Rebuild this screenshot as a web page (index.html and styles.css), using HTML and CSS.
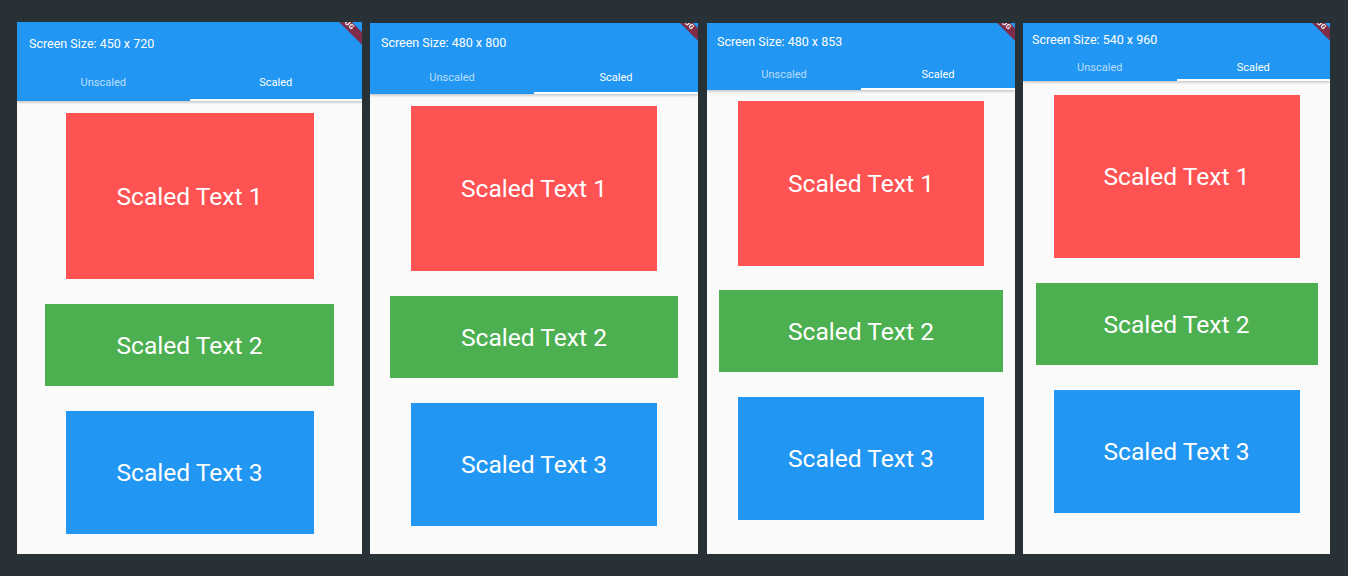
FILE: index.html
```html
<!DOCTYPE html>
<html>
<head>
<meta charset="utf-8">
<link rel="stylesheet" href="styles.css">
</head>
<body>
<div class="stage">
  <div class="phone p1">
    <div class="appbar">
      <div class="toolbar"><span class="title">Screen Size: 450 x 720</span></div>
      <div class="tabs">
        <div class="tab">Unscaled</div>
        <div class="tab active">Scaled</div>
      </div>
    </div>
    <div class="content">
      <div class="box red">Scaled Text 1</div>
      <div class="box green">Scaled Text 2</div>
      <div class="box blue">Scaled Text 3</div>
    </div>
    <div class="banner">DEBUG</div>
  </div>
  <div class="phone p2">
    <div class="appbar">
      <div class="toolbar"><span class="title">Screen Size: 480 x 800</span></div>
      <div class="tabs">
        <div class="tab">Unscaled</div>
        <div class="tab active">Scaled</div>
      </div>
    </div>
    <div class="content">
      <div class="box red">Scaled Text 1</div>
      <div class="box green">Scaled Text 2</div>
      <div class="box blue">Scaled Text 3</div>
    </div>
    <div class="banner">DEBUG</div>
  </div>
  <div class="phone p3">
    <div class="appbar">
      <div class="toolbar"><span class="title">Screen Size: 480 x 853</span></div>
      <div class="tabs">
        <div class="tab">Unscaled</div>
        <div class="tab active">Scaled</div>
      </div>
    </div>
    <div class="content">
      <div class="box red">Scaled Text 1</div>
      <div class="box green">Scaled Text 2</div>
      <div class="box blue">Scaled Text 3</div>
    </div>
    <div class="banner">DEBUG</div>
  </div>
  <div class="phone p4">
    <div class="appbar">
      <div class="toolbar"><span class="title">Screen Size: 540 x 960</span></div>
      <div class="tabs">
        <div class="tab">Unscaled</div>
        <div class="tab active">Scaled</div>
      </div>
    </div>
    <div class="content">
      <div class="box red">Scaled Text 1</div>
      <div class="box green">Scaled Text 2</div>
      <div class="box blue">Scaled Text 3</div>
    </div>
    <div class="banner">DEBUG</div>
  </div>
</div>
</body>
</html>
```
FILE: styles.css
```css
html, body {
  margin: 0;
  padding: 0;
  background: #283136;
  height: 100%;
  overflow: hidden;
}
.stage {
  display: flex;
  align-items: flex-start;
  gap: 8px;
  padding: 22px 0 0 17px;
  font-family: Roboto, "Liberation Sans", sans-serif;
}
.phone {
  position: relative;
  overflow: hidden;
  background: #fafafa;
  display: flex;
  flex-direction: column;
}
.p1 { width: 345px; height: 532px; }
.p2 { width: 328px; height: 531px; margin-top: 1px; }
.p3 { width: 308px; height: 531px; margin-top: 1px; margin-left: 1px; }
.p4 { width: 307px; height: 531px; margin-top: 1px; }

.appbar {
  background: #2196f3;
  color: #fff;
  box-shadow: 0 1px 3px rgba(0, 0, 0, 0.28);
  position: relative;
  z-index: 1;
  display: flex;
  flex-direction: column;
}
.toolbar {
  display: flex;
  align-items: center;
}
.title {
  font-size: 12.5px;
  font-weight: 400;
  white-space: nowrap;
}
.tabs {
  display: flex;
}
.tab {
  flex: 1;
  display: flex;
  align-items: center;
  justify-content: center;
  font-size: 11px;
  font-weight: 400;
  color: rgba(255, 255, 255, 0.7);
  border-bottom: 2px solid transparent;
  box-sizing: border-box;
}
.tab.active {
  color: #fff;
  border-bottom-color: #fff;
}

.p1 .toolbar { height: 43px; padding-left: 12px; }
.p1 .tabs { height: 36px; }
.p2 .toolbar { height: 39px; padding-left: 11px; }
.p2 .tabs { height: 32px; }
.p3 .toolbar { height: 37px; padding-left: 10px; }
.p3 .tabs { height: 30px; }
.p4 .toolbar { height: 32px; padding-left: 9px; }
.p4 .tabs { height: 26px; }

.content {
  display: flex;
  flex-direction: column;
  align-items: center;
}
.box {
  display: flex;
  align-items: center;
  justify-content: center;
  color: #fff;
  font-size: 24.6px;
  font-weight: 400;
  white-space: nowrap;
  flex: none;
}
.red { background: #ff5252; }
.green { background: #4caf50; }
.blue { background: #2196f3; }

.p1 .content { padding-top: 12px; }
.p1 .red { width: 248px; height: 166px; }
.p1 .green { width: 289px; height: 82px; margin-top: 25px; }
.p1 .blue { width: 248px; height: 123px; margin-top: 25px; }

.p2 .content { padding-top: 12px; }
.p2 .red { width: 246px; height: 165px; }
.p2 .green { width: 288px; height: 82px; margin-top: 25px; }
.p2 .blue { width: 246px; height: 123px; margin-top: 25px; }

.p3 .content { padding-top: 11px; }
.p3 .red { width: 246px; height: 165px; }
.p3 .green { width: 284px; height: 82px; margin-top: 24px; }
.p3 .blue { width: 246px; height: 123px; margin-top: 25px; }

.p4 .content { padding-top: 14px; }
.p4 .red { width: 246px; height: 163px; }
.p4 .green { width: 282px; height: 82px; margin-top: 25px; }
.p4 .blue { width: 246px; height: 123px; margin-top: 25px; }

.banner {
  position: absolute;
  z-index: 2;
  width: 80px;
  height: 9px;
  line-height: 9px;
  background: #7e2c48;
  color: #fff;
  font-size: 7px;
  font-weight: 700;
  letter-spacing: 0.4px;
  text-align: center;
  transform: rotate(45deg);
  right: -21.5px;
  top: -6px;
}
.p2 .banner, .p3 .banner, .p4 .banner {
  right: -25.5px;
  top: -7px;
}
```
